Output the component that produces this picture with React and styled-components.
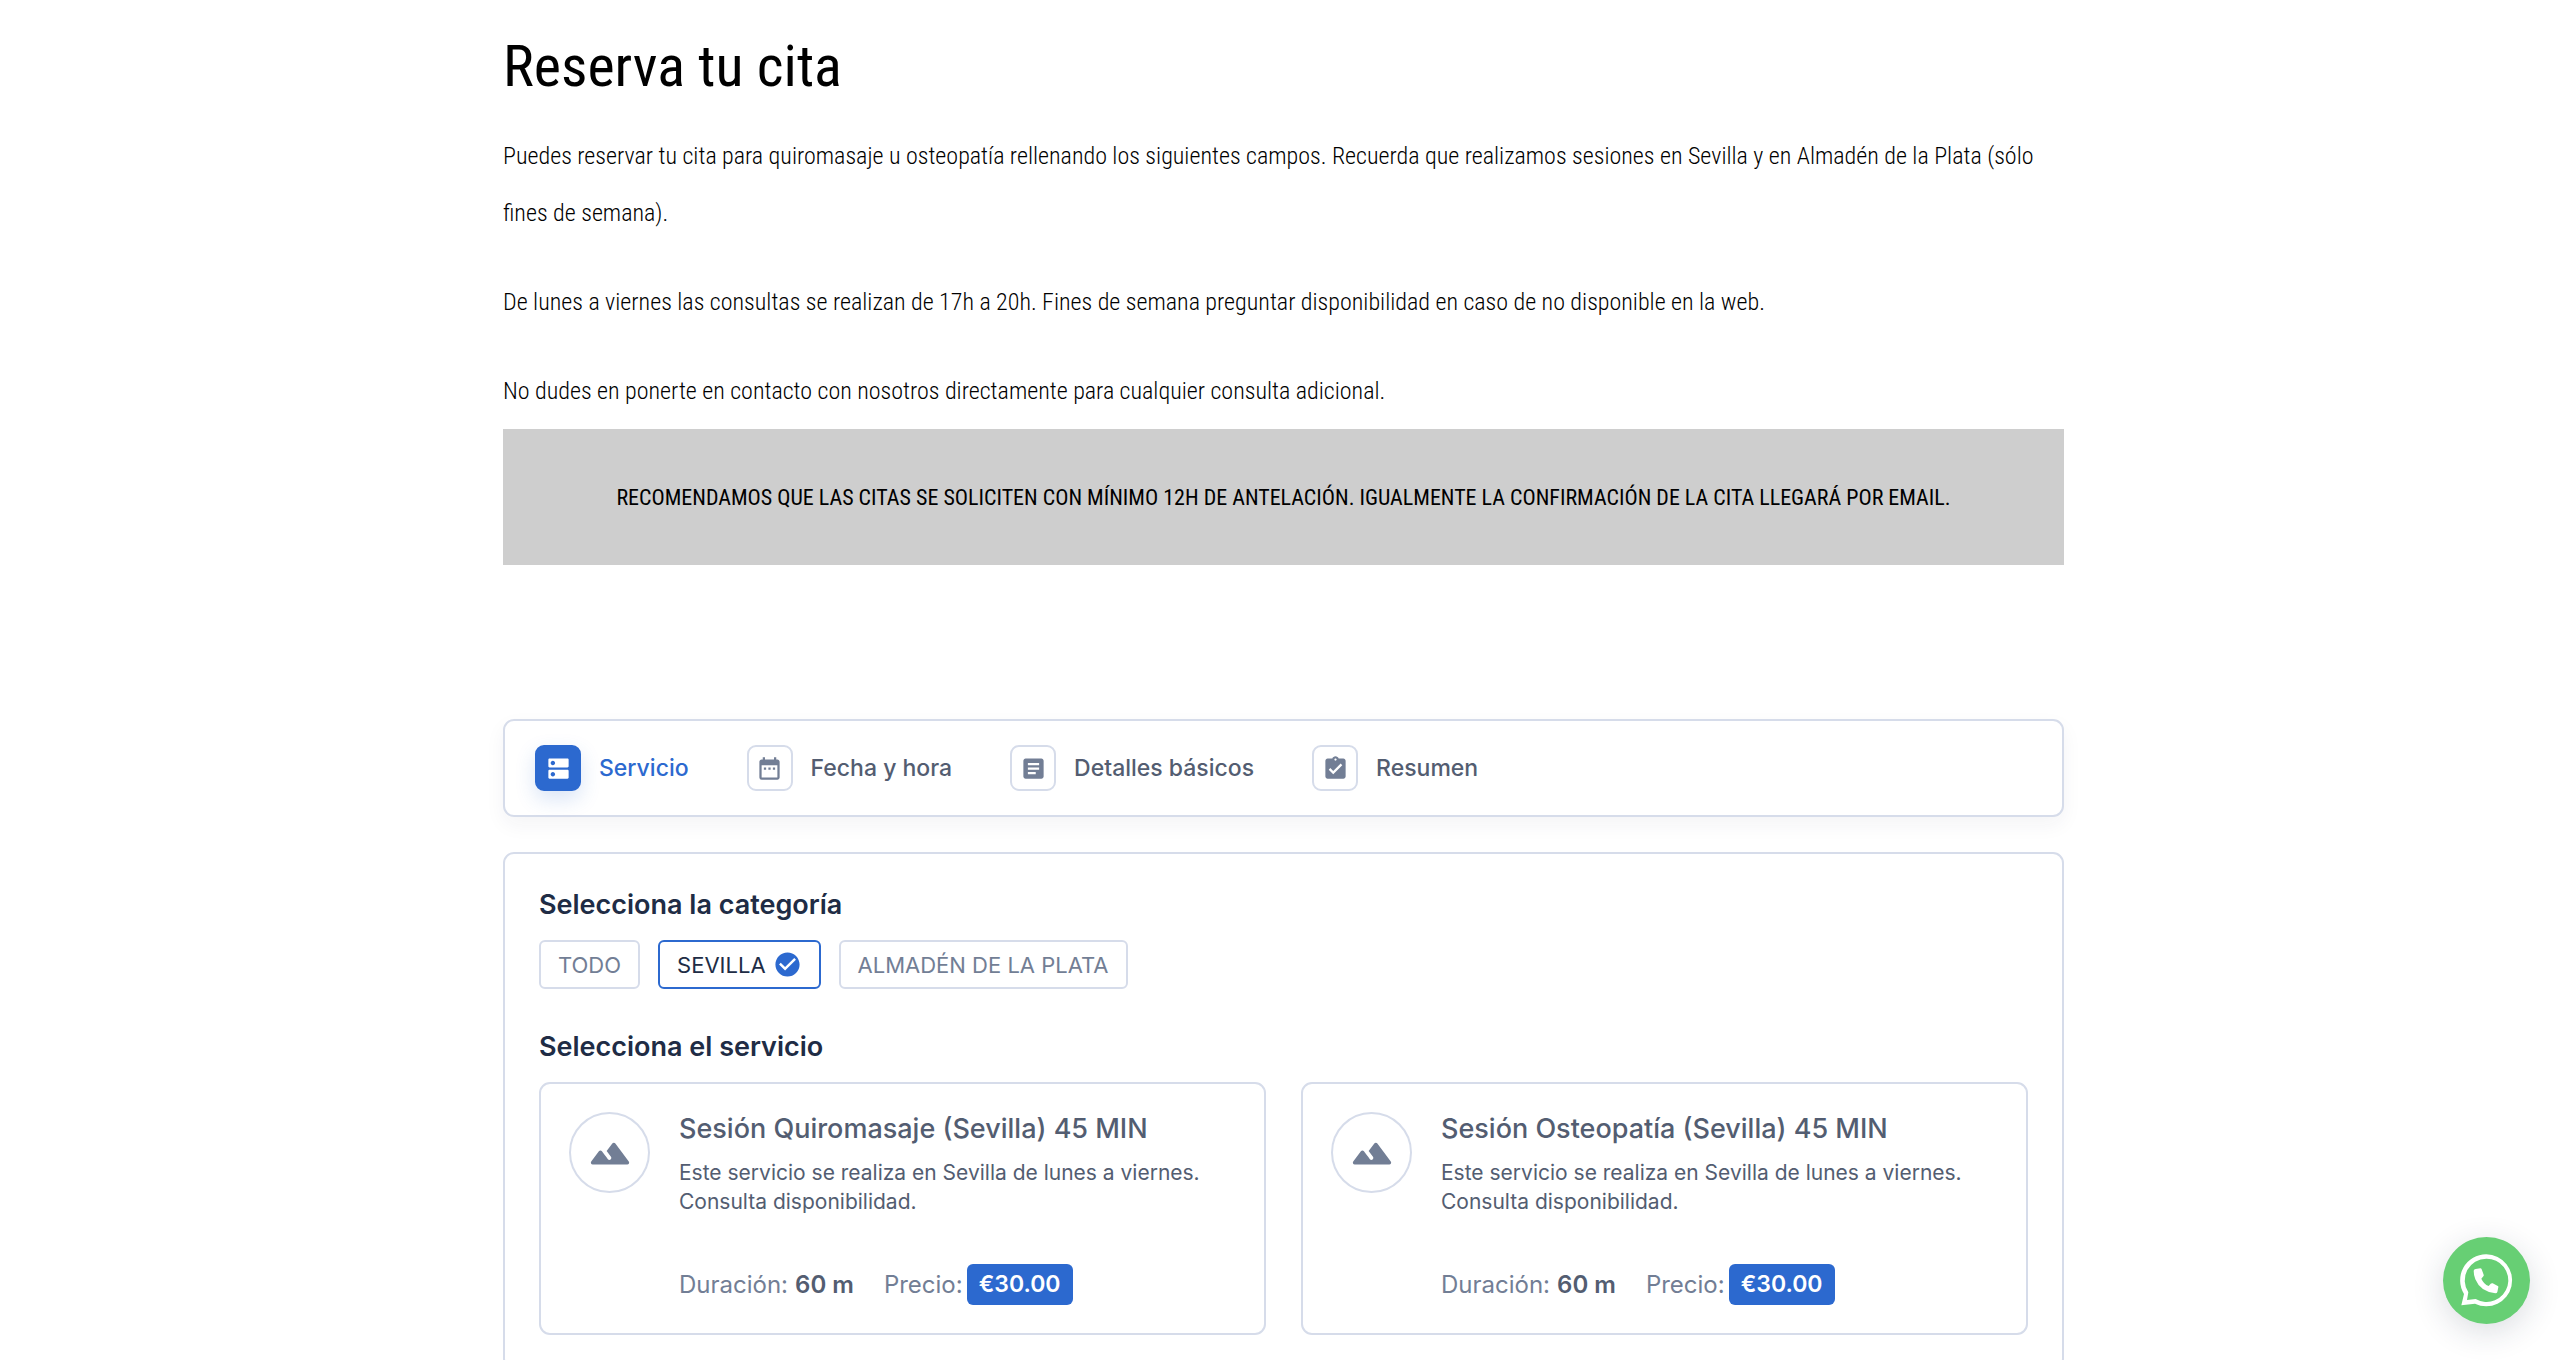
import React, { useState } from 'react';
import styled, { createGlobalStyle } from 'styled-components';
import {
  MdDns,
  MdDateRange,
  MdArticle,
  MdAssignmentTurnedIn,
  MdCheckCircle,
} from 'react-icons/md';

const blue = '#2c69cf';
const line = '#d6dcea';
const ink = '#202c45';
const slate = '#535d71';
const muted = '#727e95';

const GlobalStyle = createGlobalStyle`
  *, *::before, *::after { box-sizing: border-box; }
  body {
    margin: 0;
    background: #fff;
    color: ${slate};
    font-family: Inter, "Noto Sans", sans-serif;
  }
  h1, h2, h3, p, ol, ul { margin: 0; padding: 0; }
  button { font: inherit; cursor: pointer; }
`;

const Page = styled.main`
  display: flex;
  flex-direction: column;
  max-width: 1568px;
  margin: 0 auto;
  padding: 31px 0 34px 7px;
`;

const Intro = styled.section`
  display: flex;
  flex-direction: column;
  gap: 32px;
  color: #000;
  font-family: "Roboto Condensed", Roboto, sans-serif;
  font-size: 24px;
  font-weight: 300;
  line-height: 57px;
`;

const PageTitle = styled.h1`
  margin-bottom: 27px;
  color: #000;
  font-family: "Roboto Condensed", Roboto, sans-serif;
  font-size: 58px;
  font-weight: 400;
  line-height: 70px;
`;

const Notice = styled.p`
  && {
    margin: 9px 0 154px;
    padding: 40px 16px 39px;
  }
  background: #cecece;
  color: #000;
  font-family: "Roboto Condensed", Roboto, sans-serif;
  font-size: 22px;
  font-weight: 400;
  line-height: 57px;
  text-align: center;
`;

const Steps = styled.nav`
  padding: 24px 30px;
  border: 2px solid ${line};
  border-radius: 11px;
  background: #fff;
  box-shadow: 0 8px 20px rgba(32, 44, 69, 0.05);
`;

const StepList = styled.ol`
  display: flex;
  flex-wrap: wrap;
  gap: 24px 58px;
  list-style: none;
`;

const StepButton = styled.button`
  display: flex;
  align-items: center;
  gap: 18px;
  padding: 0;
  border: 0;
  background: none;
  color: ${(p) => (p.$active ? blue : slate)};
  font-size: 23px;
  font-weight: 500;
  line-height: 32px;
`;

const StepIcon = styled.span`
  display: grid;
  place-items: center;
  width: 46px;
  height: 46px;
  border: 2px solid ${(p) => (p.$active ? blue : line)};
  border-radius: 9px;
  background: ${(p) => (p.$active ? blue : '#fff')};
  color: ${(p) => (p.$active ? '#fff' : muted)};
  font-size: 27px;
  box-shadow: ${(p) => (p.$active ? '0 8px 20px rgba(44, 105, 207, 0.18)' : 'none')};
`;

const Panel = styled.section`
  margin-top: 35px;
  padding: 33px 34px;
  border: 2px solid ${line};
  border-radius: 11px;
`;

const SectionTitle = styled.h2`
  margin-bottom: 17px;
  color: ${ink};
  font-size: 27px;
  font-weight: 600;
  line-height: 36px;
`;

const Categories = styled.div`
  display: flex;
  flex-wrap: wrap;
  gap: 18px;
  margin-bottom: 40px;
`;

const Category = styled.button`
  display: flex;
  align-items: center;
  gap: 7px;
  height: 49px;
  padding: 0 17px;
  border: 2px solid ${(p) => (p.$active ? blue : line)};
  border-radius: 6px;
  background: #fff;
  color: ${(p) => (p.$active ? ink : muted)};
  font-size: 22px;
  line-height: 32px;

  svg {
    color: ${blue};
    font-size: 29px;
  }
`;

const Services = styled.div`
  display: grid;
  grid-template-columns: repeat(auto-fit, minmax(560px, 1fr));
  gap: 35px;
`;

const Card = styled.article`
  display: flex;
  gap: 29px;
  padding: 28px;
  border: 2px solid ${line};
  border-radius: 11px;
`;

const Thumb = styled.span`
  display: grid;
  flex: none;
  place-items: center;
  width: 81px;
  height: 81px;
  border: 2px solid ${line};
  border-radius: 50%;
  color: ${muted};
`;

const CardBody = styled.div`
  flex: 1;
  min-width: 0;
`;

const CardTitle = styled.h3`
  font-size: 27px;
  font-weight: 500;
  line-height: 34px;
`;

const Description = styled.p`
  && { margin: 12px 0 48px; }
  max-width: 540px;
  font-size: 21px;
  line-height: 29px;
`;

const Meta = styled.div`
  display: flex;
  flex-wrap: wrap;
  gap: 30px;
  color: ${muted};
  font-size: 24px;
  line-height: 41px;
`;

const MetaItem = styled.span`
  display: flex;
  gap: ${(p) => (p.$tight ? '4px' : '7px')};
`;

const Duration = styled.strong`
  color: ${slate};
  font-weight: 600;
`;

const Price = styled.strong`
  padding: 0 12px;
  border-radius: 6px;
  background: ${blue};
  color: #fff;
  font-size: 23px;
  font-weight: 600;
`;

const Chat = styled.a`
  position: fixed;
  right: 30px;
  bottom: 36px;
  width: 87px;
  height: 87px;
  border-radius: 50%;
  background: #67cf74;
  box-shadow: 0 8px 32px rgba(32, 44, 69, 0.16);

  svg { display: block; }
`;

function Mountains() {
  return (
    <svg width="46" height="46" viewBox="0 0 24 24" fill="currentColor" aria-hidden="true">
      <path d="M13.2 7.07L10.25 11l2.25 3c.33.44.24 1.07-.2 1.4-.44.33-1.07.25-1.4-.2-1.05-1.4-2.31-3.07-3.1-4.14-.4-.53-1.2-.53-1.6 0l-4 5.33c-.49.67-.02 1.61.8 1.61h18c.82 0 1.29-.94.8-1.6l-7-9.33c-.4-.54-1.2-.54-1.6 0z" />
    </svg>
  );
}

function WhatsApp() {
  return (
    <svg width="87" height="87" viewBox="128 111 261 261" fill="#fff" aria-hidden="true">
      <path
        fillRule="evenodd"
        d="M258 163a78 78 0 1 1-34 148.500L183 316L191 282A78 78 0 0 1 258 163ZM258 176a65 65 0 0 0-54 101L200 300L226 297A65 65 0 1 0 258 176Z"
      />
      <path d="M220 212Q221 208 226 207L240 205Q243 205 244 208L250 224Q251 227 249 229L243 236Q250 252 265 258L271 251Q274 249 277 250L291 257Q295 258 294 262L291 276Q290 280 285 280Q240 275 225 238Q220 225 220 212Z" />
    </svg>
  );
}

const steps = [
  { label: 'Servicio', Icon: MdDns },
  { label: 'Fecha y hora', Icon: MdDateRange },
  { label: 'Detalles básicos', Icon: MdArticle },
  { label: 'Resumen', Icon: MdAssignmentTurnedIn },
];

const categories = ['TODO', 'SEVILLA', 'ALMADÉN DE LA PLATA'];

const services = [
  { name: 'Sesión Quiromasaje (Sevilla) 45 MIN', duration: '60 m', price: '€30.00' },
  { name: 'Sesión Osteopatía (Sevilla) 45 MIN', duration: '60 m', price: '€30.00' },
];

export default function App() {
  const [step, setStep] = useState('Servicio');
  const [category, setCategory] = useState('SEVILLA');

  return (
    <>
      <GlobalStyle />
      <Page>
        <PageTitle>Reserva tu cita</PageTitle>
        <Intro>
          <p>
            Puedes reservar tu cita para quiromasaje u osteopatía rellenando los siguientes campos.
            Recuerda que realizamos sesiones en Sevilla y en Almadén de la Plata (sólo fines de
            semana).
          </p>
          <p>
            De lunes a viernes las consultas se realizan de 17h a 20h. Fines de semana preguntar
            disponibilidad en caso de no disponible en la web.
          </p>
          <p>
            No dudes en ponerte en contacto con nosotros directamente para cualquier consulta
            adicional.
          </p>
        </Intro>
        <Notice>
          RECOMENDAMOS QUE LAS CITAS SE SOLICITEN CON MÍNIMO 12H DE ANTELACIÓN. IGUALMENTE LA
          CONFIRMACIÓN DE LA CITA LLEGARÁ POR EMAIL.
        </Notice>

        <Steps aria-label="Reserva">
          <StepList>
            {steps.map(({ label, Icon }) => (
              <li key={label}>
                <StepButton type="button" $active={label === step} onClick={() => setStep(label)}>
                  <StepIcon $active={label === step}>
                    <Icon aria-hidden="true" />
                  </StepIcon>
                  {label}
                </StepButton>
              </li>
            ))}
          </StepList>
        </Steps>

        <Panel>
          <SectionTitle>Selecciona la categoría</SectionTitle>
          <Categories>
            {categories.map((name) => (
              <Category
                key={name}
                type="button"
                aria-pressed={name === category}
                $active={name === category}
                onClick={() => setCategory(name)}
              >
                {name}
                {name === category && <MdCheckCircle aria-hidden="true" />}
              </Category>
            ))}
          </Categories>

          <SectionTitle>Selecciona el servicio</SectionTitle>
          <Services>
            {services.map((service) => (
              <Card key={service.name}>
                <Thumb>
                  <Mountains />
                </Thumb>
                <CardBody>
                  <CardTitle>{service.name}</CardTitle>
                  <Description>
                    Este servicio se realiza en Sevilla de lunes a viernes. Consulta disponibilidad.
                  </Description>
                  <Meta>
                    <MetaItem>
                      Duración: <Duration>{service.duration}</Duration>
                    </MetaItem>
                    <MetaItem $tight>
                      Precio: <Price>{service.price}</Price>
                    </MetaItem>
                  </Meta>
                </CardBody>
              </Card>
            ))}
          </Services>
        </Panel>
      </Page>
      <Chat href="#whatsapp" aria-label="WhatsApp">
        <WhatsApp />
      </Chat>
    </>
  );
}
